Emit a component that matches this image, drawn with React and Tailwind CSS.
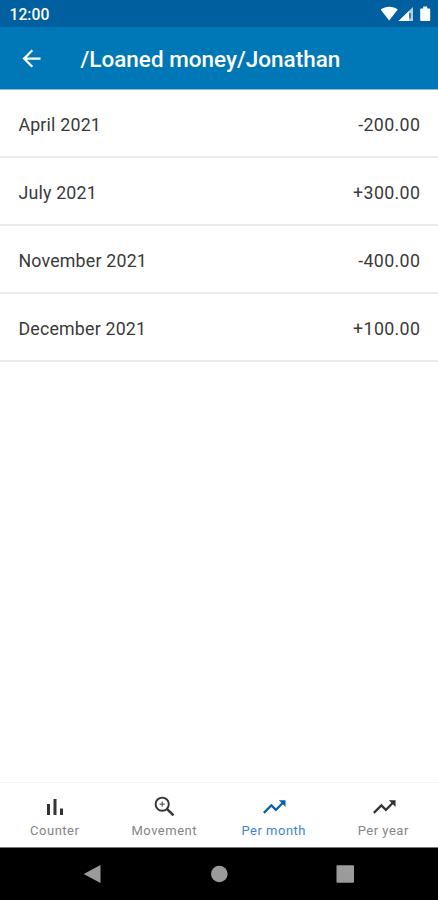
import { MdArrowBack, MdTrendingUp } from 'react-icons/md';

const rows = [
  { label: 'April 2021', amount: '-200.00' },
  { label: 'July 2021', amount: '+300.00' },
  { label: 'November 2021', amount: '-400.00' },
  { label: 'December 2021', amount: '+100.00' },
];

const CounterIcon = () => (
  <svg viewBox="0 0 27 27" className="h-[27px] w-[27px]" fill="currentColor">
    <path d="M6 11h3v11h-3zM12.5 6h3v16h-3zM19 15.5h3v6.5h-3z" />
  </svg>
);

const MovementIcon = () => (
  <svg viewBox="0 0 27 27" className="h-[27px] w-[27px]" fill="none" stroke="currentColor">
    <circle cx="11.2" cy="11.2" r="6.6" strokeWidth="1.9" />
    <path d="M15.9 15.9l6.6 6.5" strokeWidth="2.4" />
    <path d="M11.2 8.6v5.2M8.6 11.2h5.2" strokeWidth="1.2" opacity="0.8" />
  </svg>
);

const TrendIcon = () => <MdTrendingUp size={27} className="translate-x-[0.8px] translate-y-[0.4px]" />;

const tabs = [
  { label: 'Counter', icon: <CounterIcon /> },
  { label: 'Movement', icon: <MovementIcon /> },
  { label: 'Per month', icon: <TrendIcon />, active: true },
  { label: 'Per year', icon: <TrendIcon /> },
];

const StatusIcons = () => (
  <svg viewBox="0 0 52 18" className="h-[18px] w-[52px]" fill="white">
    <path d="M-.3 4.5C4.5 .8 12 .8 16.7 4.5L8.2 15.5z" />
    <path d="M17.5 16L32 2v14z" opacity="0.7" />
    <path d="M17.5 16L28 5.9V16z" />
    <path d="M28.3 8h1.4v5.5h-1.4z" fill="#005f9e" />
    <path d="M40.1 3.4h2.1V1.6h4v1.8h2.1q.9 0 .9.9v10.8q0 .9-.9.9h-8.2q-.9 0-.9-.9V4.3q0-.9.9-.9z" />
  </svg>
);

export default function App() {
  return (
    <div className="flex h-[900px] w-[438px] flex-col overflow-hidden bg-white font-['Roboto',sans-serif]">
      <div className="flex h-[27px] items-center justify-between bg-[#005f9e] pr-[5px] pl-[9.5px] text-white">
        <span className="pt-[2px] text-[15.7px] leading-none font-medium">12:00</span>
        <StatusIcons />
      </div>

      <header className="flex h-[62px] items-center bg-[#0077b6] pl-[18px] text-white">
        <button type="button" aria-label="Back">
          <MdArrowBack size={27} />
        </button>
        <h1 className="ml-[35.5px] pt-[3px] text-[22.5px] leading-none font-medium">/Loaned money/Jonathan</h1>
      </header>

      <main className="flex-1 border-t border-[#8cbcd9]">
        {rows.map((row) => (
          <div
            key={row.label}
            className="flex h-[68px] items-center justify-between border-b-2 border-[#ebebeb] px-[18px] pt-[4px] text-[17.8px] leading-[24px] text-[#3a3a3a]"
          >
            <span className="ml-[0.4px] tracking-[0.2px]">{row.label}</span>
            <span className="-mr-[0.3px] tracking-[0.35px]">{row.amount}</span>
          </div>
        ))}
      </main>

      <nav className="grid h-[65px] grid-cols-4 border-t border-[#f3f3f3]">
        {tabs.map((tab) => (
          <button
            key={tab.label}
            type="button"
            className={`flex flex-col items-center pt-[10px] ${tab.active ? 'text-[#0a62a9]' : 'text-[#333333]'}`}
          >
            {tab.icon}
            <span
              className={`mt-[3px] text-[13px] leading-[16px] tracking-[0.5px] ${tab.active ? 'text-[#4585c4]' : 'text-[#858585]'}`}
            >
              {tab.label}
            </span>
          </button>
        ))}
      </nav>

      <div className="h-[53px] border-t border-[#777777] bg-black">
        <svg viewBox="0 0 438 52" className="h-[52px] w-full" fill="#9b9b9b">
          <path d="M83.7 26L100.5 17v18z" />
          <circle cx="219.3" cy="26" r="8.3" />
          <rect x="336.5" y="17.3" width="17.5" height="17.5" rx="1" />
        </svg>
      </div>
    </div>
  );
}
